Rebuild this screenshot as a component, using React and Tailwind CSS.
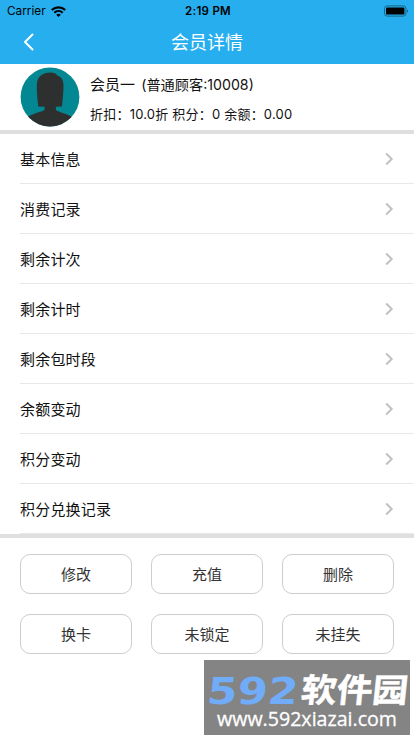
import React from "react";

const rows = ["基本信息", "消费记录", "剩余计次", "剩余计时", "剩余包时段", "余额变动", "积分变动", "积分兑换记录"];
const actions = ["修改", "充值", "删除", "换卡", "未锁定", "未挂失"];

function StatusBar() {
  return (
    <div className="grid h-[21px] grid-cols-3 items-center pl-[7px] pr-[5px] text-black">
      <div className="flex items-center gap-[5px]">
        <span className="text-[11.800px] leading-[21px]">Carrier</span>
        <svg className="h-[11px] w-[15px]" viewBox="0 0 15 11">
          <path d="M.8 4C4.600.4 10.400.4 14.200 4" fill="none" stroke="#000" strokeWidth="2.300" />
          <path d="M3.300 6.700c2.400-2.300 6-2.300 8.400 0" fill="none" stroke="#000" strokeWidth="2.100" />
          <path d="M7.500 11 5.200 8.700c1.300-1.200 3.300-1.200 4.600 0z" fill="#000" />
        </svg>
      </div>
      <span className="pt-px text-center text-[11.500px] font-semibold leading-[21px] tracking-[0.300px]">2:19 PM</span>
      <svg className="h-[12px] w-[25px] justify-self-end" viewBox="0 0 25 12">
        <rect x=".5" y=".9" width="21.4" height="10.2" rx="2.6" fill="none" stroke="#156687" />
        <rect x="2" y="2.4" width="18.4" height="7.2" rx="1.2" fill="#000" />
        <path d="M23 4.3c1.4.6 1.4 2.8 0 3.4z" fill="#156687" />
      </svg>
    </div>
  );
}

function Avatar() {
  return (
    <svg className="h-[60px] w-[60px] shrink-0" viewBox="0 0 60 60">
      <defs>
        <clipPath id="face"><circle cx="30" cy="30" r="29.4" /></clipPath>
      </defs>
      <g clipPath="url(#face)">
        <rect width="60" height="60" fill="#038792" />
        <path d="M18.200 39.500C17.500 32 16.500 23 16.900 17 17.400 9.500 22.500 5.500 30.500 5.500c3 0 5.700 1.100 7 3.200 4.300.8 6 5 6 9.800 0 7-.8 14-1.600 21l-6 .3v3.200c3.500 2.600 13.500 4.200 17.500 8L56 60H4l2.500-9c3.500-4 13.500-5.400 18-8v-3.200z" fill="#2e302f" />
      </g>
    </svg>
  );
}

function Watermark() {
  return (
    <svg className="absolute left-[204px] top-[660px] h-[75px] w-[206px]" viewBox="0 0 206 75">
      <rect width="206" height="75" fill="#848484" />
      <text transform="translate(2 44) skewX(-6)" fontFamily="'DejaVu Sans', sans-serif" fontWeight="700" fontSize="37" textLength="91" lengthAdjust="spacingAndGlyphs" fill="#70acf8">592</text>
      <text transform="translate(96 41.500) skewX(-6)" fontFamily="'Noto Sans CJK SC', sans-serif" fontWeight="700" fontSize="33" textLength="107" lengthAdjust="spacingAndGlyphs" fill="#fff" stroke="#fff" strokeWidth=".5">软件园</text>
      <text x="13" y="66" fontFamily="'Open Sans', sans-serif" fontWeight="500" fontSize="20" textLength="180" lengthAdjust="spacingAndGlyphs" fill="#fff" stroke="#fff" strokeWidth=".3">www.592xiazai.com</text>
    </svg>
  );
}

export default function App() {
  return (
    <div className="relative h-[736px] w-[414px] overflow-hidden bg-white font-['Inter','Noto_Sans_CJK_SC',sans-serif] text-[#111]">
      <header className="h-[64px] bg-[#26aeee]">
        <StatusBar />
        <div className="grid h-[43px] grid-cols-[60px_1fr_60px] items-center text-white">
          <svg className="mb-px ml-[23px] h-[18px] w-[12px]" viewBox="0 0 12 18" fill="none" stroke="#fff" strokeWidth="2" strokeLinecap="round" strokeLinejoin="round">
            <path d="M9.500 1.500 2 9l7.500 7.500" />
          </svg>
          <h1 className="text-center text-[18px] font-normal leading-[42px]">会员详情</h1>
        </div>
      </header>
      <section className="flex h-[70px] items-start border-b-4 border-[#dfdfdf] pl-[20px] pt-[3px]">
        <Avatar />
        <div className="ml-[10px] flex flex-col whitespace-pre">
          <p className="h-[34px] pt-px text-[15px] leading-[34px]">会员一 <span className="ml-[2px] text-[14.200px]">(普通顾客:10008)</span></p>
          <p className="h-[26px] text-[13px] leading-[26px] tracking-[0.210px]">折扣：10.0折 积分：0 余额：0.00</p>
        </div>
      </section>
      <ul className="border-b-4 border-[#dfdfdf]">
        {rows.map((label) => (
          <li key={label} className="ml-[20px] flex h-[50px] items-center justify-between border-b border-[#e8e8e8] pr-[20px]">
            <span className="pt-[3px] text-[15px] tracking-[0.200px]">{label}</span>
            <svg className="h-[14px] w-[9px]" viewBox="0 0 9 14" fill="none" stroke="#c1c1c3" strokeWidth="2">
              <path d="m1.200 1.500 5.500 5.500-5.500 5.500" />
            </svg>
          </li>
        ))}
      </ul>
      <div className="grid grid-cols-3 gap-x-[19px] gap-y-[20px] px-[20px] pt-[16px]">
        {actions.map((label) => (
          <button key={label} className="h-[40px] rounded-[10px] border border-[#cdcdcd] pt-[2px] text-[15px] text-[#333]">{label}</button>
        ))}
      </div>
      <Watermark />
    </div>
  );
}
